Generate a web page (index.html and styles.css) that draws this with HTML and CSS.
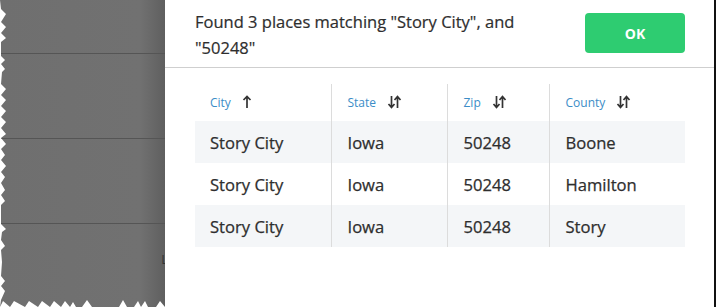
FILE: index.html
```html
<!DOCTYPE html>
<html lang="en">
<head>
    <meta charset="UTF-8">
    <meta name="viewport" content="width=device-width, initial-scale=1.0">
    <title>Place Lookup</title>
    <link rel="stylesheet" href="styles.css">
</head>
<body>
    <!-- Dimmed page behind the dialog -->
    <div class="backdrop">
        <div class="backdrop-row"></div>
        <div class="backdrop-row"></div>
        <div class="backdrop-row"></div>
        <div class="backdrop-row last"><span class="peek">L</span></div>
    </div>

    <div class="results-panel">
        <div class="panel-header">
            <p class="panel-title">Found 3 places matching "Story City", and "50248"</p>
            <button class="ok-button">OK</button>
        </div>

        <table class="places-table">
            <thead>
                <tr>
                    <th class="col-city">City
                        <svg class="sort-icon" width="10" height="14" viewBox="0 0 10 14"><path d="M5 13V1.5M1.5 5L5 1.5 8.5 5"/></svg>
                    </th>
                    <th class="col-state">State
                        <svg class="sort-icon" width="15" height="14" viewBox="0 0 15 14"><path d="M4.5 1v11.5M1.5 9l3 3.5 3-3.5M10.5 13V1.5M7.5 5l3-3.5 3 3.5"/></svg>
                    </th>
                    <th class="col-zip">Zip
                        <svg class="sort-icon" width="15" height="14" viewBox="0 0 15 14"><path d="M4.5 1v11.5M1.5 9l3 3.5 3-3.5M10.5 13V1.5M7.5 5l3-3.5 3 3.5"/></svg>
                    </th>
                    <th class="col-county">County
                        <svg class="sort-icon" width="15" height="14" viewBox="0 0 15 14"><path d="M4.5 1v11.5M1.5 9l3 3.5 3-3.5M10.5 13V1.5M7.5 5l3-3.5 3 3.5"/></svg>
                    </th>
                </tr>
            </thead>
            <tbody>
                <tr><td>Story City</td><td>Iowa</td><td>50248</td><td>Boone</td></tr>
                <tr><td>Story City</td><td>Iowa</td><td>50248</td><td>Hamilton</td></tr>
                <tr><td>Story City</td><td>Iowa</td><td>50248</td><td>Story</td></tr>
            </tbody>
        </table>
    </div>

    <div class="window-edge"></div>
</body>
</html>
```

FILE: styles.css
```css
/* Reset */
* {
    margin: 0;
    padding: 0;
    box-sizing: border-box;
}

body {
    width: 717px;
    height: 307px;
    display: flex;
    background-color: #fff;
    font-family: "Open Sans", "Noto Sans", sans-serif;
    color: #333;
    overflow: hidden;
}

/* Grey torn-paper backdrop */
.backdrop {
    width: 165px;
    height: 307px;
    flex-shrink: 0;
    display: flex;
    flex-direction: column;
    background: linear-gradient(to right, #6f6f6f 0, #717171 140px, #5f5f5f 165px);
    clip-path: polygon(0 0, 165px 0, 165px 307px,
        160px 301px, 156px 307px, 148px 307px, 145px 301px, 141px 307px, 138px 301px, 134px 307px,
        127px 307px, 123px 300px, 119px 307px, 92px 307px, 87px 300px, 82px 307px, 76px 307px,
        73px 302px, 70px 307px, 65px 301px, 61px 307px, 54px 301px, 50px 307px, 42px 301px,
        38px 307px, 29px 301px, 25px 307px, 14px 301px, 10px 307px, 3px 301px, 0 307px,
        1px 300px, 5px 291px, 1px 286px, 5px 281px, 1px 276px, 2px 262px, 1px 250px,
        5px 246px, 1px 240px, 2px 232px, 6px 229px, 1px 224px, 1px 205px, 5px 201px,
        1px 195px, 5px 190px, 1px 183px, 5px 177px, 1px 172px, 6px 166px, 1px 160px,
        5px 155px, 1px 149px, 6px 144px, 1px 138px, 6px 134px, 1px 128px, 6px 122px,
        1px 117px, 6px 111px, 1px 106px, 6px 100px, 1px 95px, 6px 89px, 1px 84px,
        2px 72px, 5px 69px, 1px 64px, 5px 60px, 1px 56px, 1px 42px, 6px 38px,
        1px 33px, 6px 27px, 1px 22px, 6px 14px, 1px 9px);
}

.backdrop-row {
    height: 54px;
    border-bottom: 1px solid #555;
    position: relative;
}

.backdrop-row + .backdrop-row {
    height: 85px;
}

.backdrop-row.last {
    flex: 1;
    border-bottom: none;
}

.peek {
    position: absolute;
    right: -3px;
    top: 26px;
    font-size: 13px;
    color: #333;
}

/* Dialog panel */
.results-panel {
    width: 549px;
    flex-shrink: 0;
    background-color: #fff;
}

.panel-header {
    height: 68px;
    display: flex;
    align-items: flex-start;
    justify-content: space-between;
    padding: 9px 29px 0 30px;
    border-bottom: 1px solid #cfcfcf;
}

.panel-title {
    width: 345px;
    font-size: 16.5px;
    line-height: 26px;
    color: #2e2e2e;
    -webkit-text-stroke: 0.2px #2e2e2e;
}

.ok-button {
    width: 100px;
    height: 40px;
    margin-top: 4px;
    background-color: #2ecc71;
    color: #fff;
    border: none;
    border-radius: 4px;
    font-family: inherit;
    font-size: 14px;
    font-weight: 700;
}

/* Results table */
.places-table {
    width: 490px;
    margin: 16px 0 0 30px;
    border-collapse: collapse;
}

.places-table th {
    height: 37px;
    padding: 0 15px;
    text-align: left;
    font-size: 12px;
    font-weight: 400;
    color: #3b8dc7;
    white-space: nowrap;
}

.places-table td {
    height: 42px;
    padding: 0 15px;
    font-size: 16.6px;
    color: #2e2e2e;
    -webkit-text-stroke: 0.25px #2e2e2e;
}

.places-table th + th,
.places-table td + td {
    border-left: 1px solid #dcdcdc;
    padding-left: 16px;
}

.places-table tbody tr:nth-child(odd) {
    background-color: #f4f6f8;
}

.col-city { width: 136px; }
.col-state { width: 116px; }
.col-zip { width: 102px; }
.col-county { width: 136px; }

.sort-icon {
    margin-left: 8px;
    vertical-align: -2px;
    fill: none;
    stroke: #333;
    stroke-width: 1.7;
}

/* Dark window border on the far right */
.window-edge {
    width: 3px;
    flex-shrink: 0;
    border-left: 2px solid #111;
    background-color: #fff;
}
```
